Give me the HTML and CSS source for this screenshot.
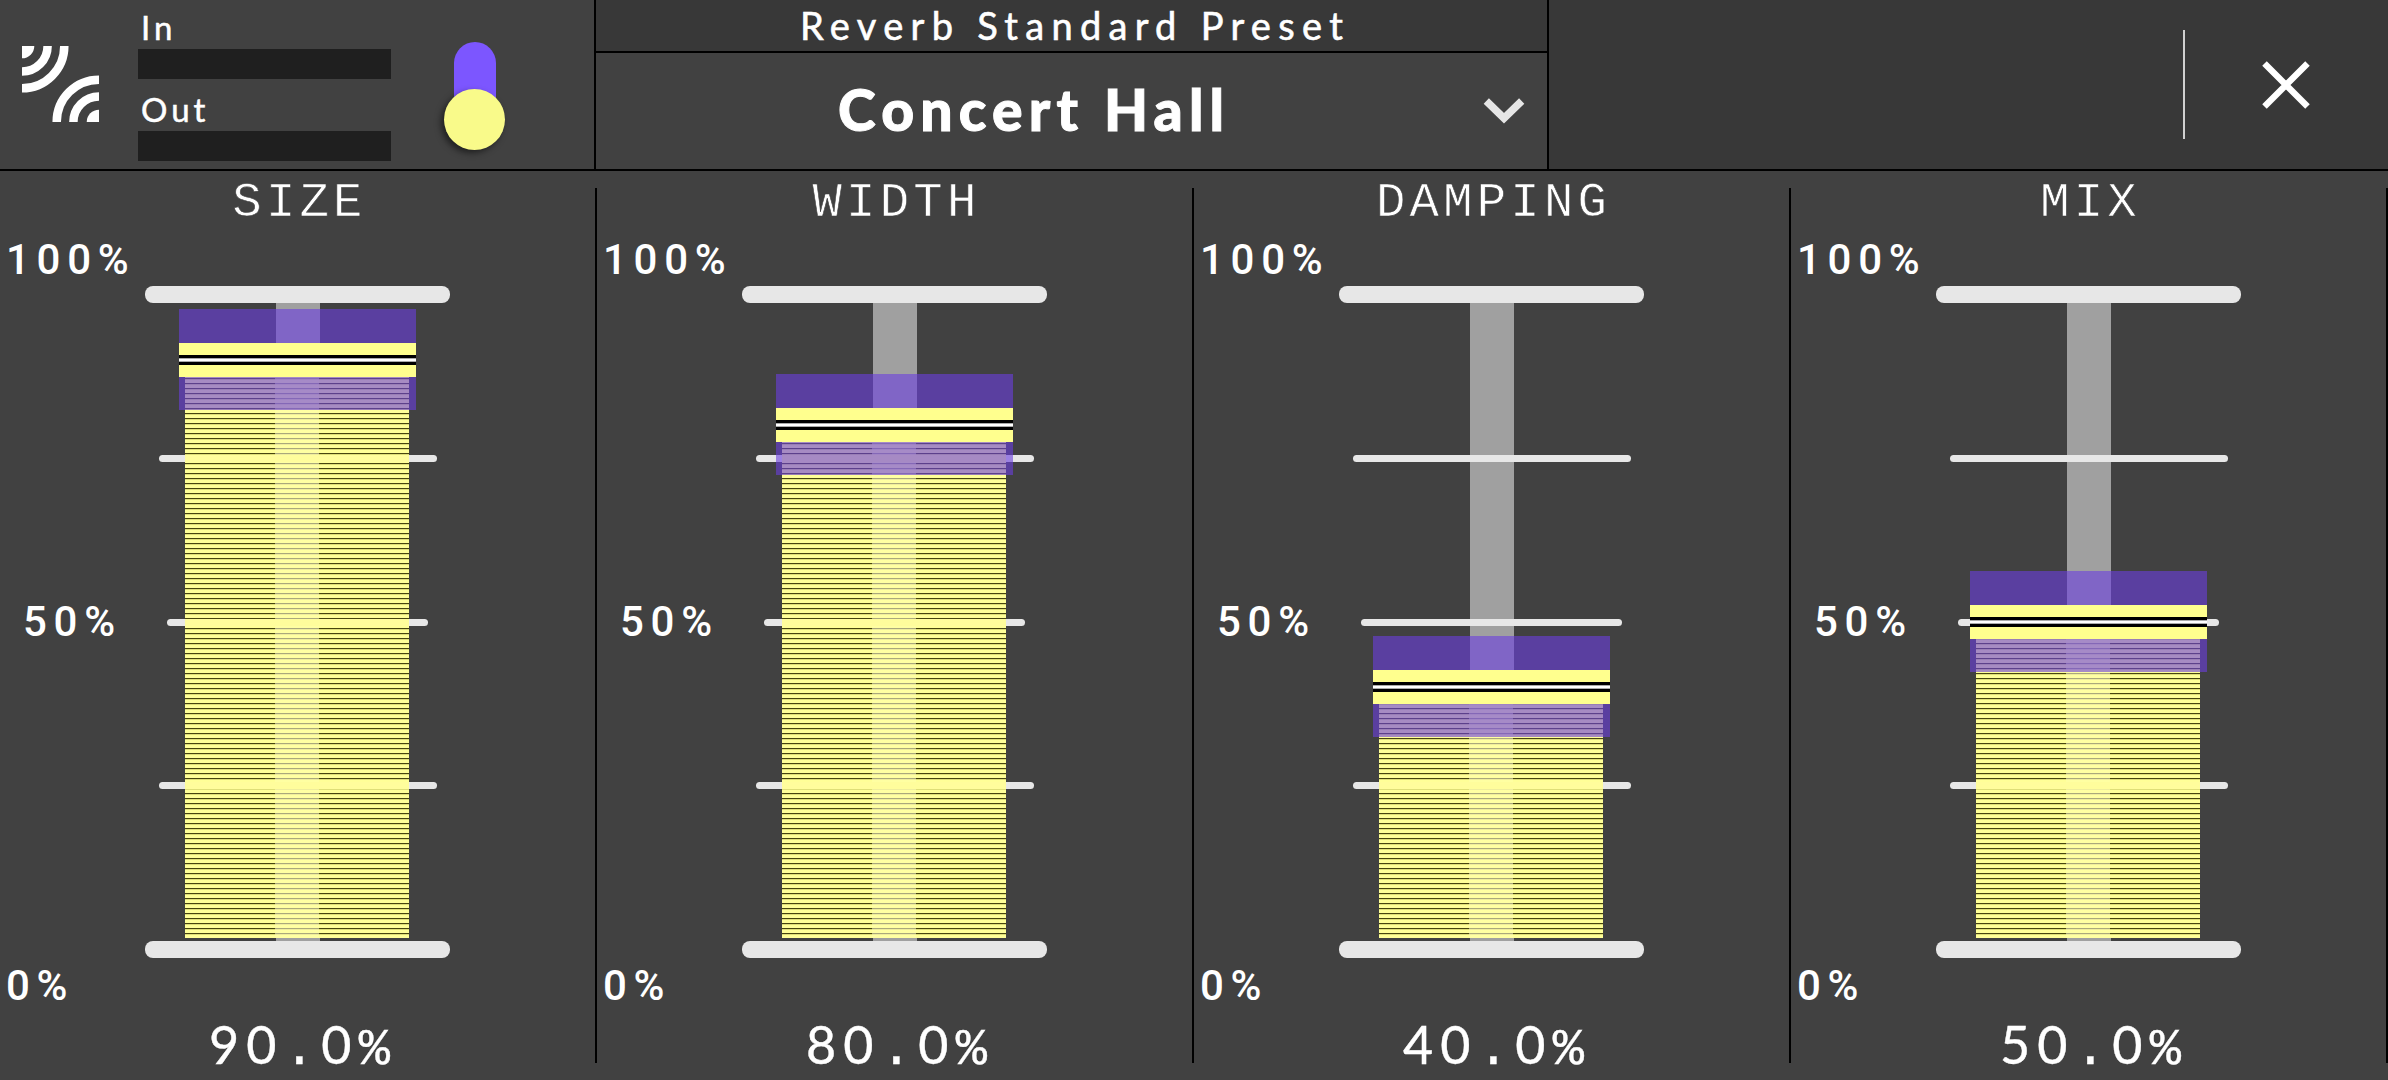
FILE: index.html
```html
<!DOCTYPE html>
<html lang="en">
<head>
<meta charset="utf-8">
<title>Reverb</title>
<link rel="stylesheet" href="styles.css">
</head>
<body>
<header class="topbar">
  <section class="io">
    <svg class="logo" viewBox="0 0 77 76" width="77" height="76" fill="none" stroke="#fff" stroke-width="8.5">
      <path d="M0 0H12.3A12.3 12.3 0 0 1 0 12.3Z" fill="#fff" stroke="none"/>
      <path d="M0 25.6A25.6 25.6 0 0 0 25.6 0M0 42.3A42.3 42.3 0 0 0 42.3 0"/>
      <path d="M77 76H64.7A12.3 12.3 0 0 1 77 63.7Z" fill="#fff" stroke="none"/>
      <path d="M77 50.4A25.6 25.6 0 0 0 51.4 76M77 33.7A42.3 42.3 0 0 0 34.7 76"/>
    </svg>
    <div class="meters">
      <span class="meter-label">In</span><div class="meter"></div>
      <span class="meter-label out">Out</span><div class="meter"></div>
    </div>
    <div class="toggle"><div class="knob"></div></div>
  </section>
  <section class="preset">
    <div class="preset-title"><span>Reverb Standard Preset</span></div>
    <div class="preset-select"><span class="preset-name">Concert Hall</span>
      <svg class="chevron" width="42" height="28" viewBox="0 0 42 28" fill="none" stroke="#e6e6e6" stroke-width="7.5"><path d="M3.3 4L21 21.3L38.7 4"/></svg>
    </div>
  </section>
  <section class="actions">
    <div class="rule"></div>
    <svg class="close" width="48" height="48" viewBox="0 0 48 48" stroke="#fff" stroke-width="6.4"><path d="M2.5 2.5L45.5 45.5M45.5 2.5L2.5 45.5"/></svg>
  </section>
</header>
<main class="faders">
  <section class="fader" style="--y:74px">
    <h2 class="name">SIZE</h2>
    <span class="mark full">100%</span><span class="mark half">50%</span><span class="mark zero">0%</span>
    <div class="slider"><i class="track"></i><i class="tick t75"></i><i class="tick t50"></i><i class="tick t25"></i><i class="fill"></i><i class="glow"></i><i class="thumb"></i><i class="cap"></i><i class="cap base"></i></div>
    <div class="value">90<b>.</b>0<b>%</b></div>
  </section>
  <section class="fader" style="--y:139px">
    <h2 class="name">WIDTH</h2>
    <span class="mark full">100%</span><span class="mark half">50%</span><span class="mark zero">0%</span>
    <div class="slider"><i class="track"></i><i class="tick t75"></i><i class="tick t50"></i><i class="tick t25"></i><i class="fill"></i><i class="glow"></i><i class="thumb"></i><i class="cap"></i><i class="cap base"></i></div>
    <div class="value">80<b>.</b>0<b>%</b></div>
  </section>
  <section class="fader" style="--y:401px">
    <h2 class="name">DAMPING</h2>
    <span class="mark full">100%</span><span class="mark half">50%</span><span class="mark zero">0%</span>
    <div class="slider"><i class="track"></i><i class="tick t75"></i><i class="tick t50"></i><i class="tick t25"></i><i class="fill"></i><i class="glow"></i><i class="thumb"></i><i class="cap"></i><i class="cap base"></i></div>
    <div class="value">40<b>.</b>0<b>%</b></div>
  </section>
  <section class="fader" style="--y:336px">
    <h2 class="name">MIX</h2>
    <span class="mark full">100%</span><span class="mark half">50%</span><span class="mark zero">0%</span>
    <div class="slider"><i class="track"></i><i class="tick t75"></i><i class="tick t50"></i><i class="tick t25"></i><i class="fill"></i><i class="glow"></i><i class="thumb"></i><i class="cap"></i><i class="cap base"></i></div>
    <div class="value">50<b>.</b>0<b>%</b></div>
  </section>
</main>
</body>
</html>
```
FILE: styles.css
```css
* { box-sizing: border-box; }
body { margin: 0; width: 2388px; height: 1080px; overflow: hidden; background: #414141; color: #fff; font-family: Lato, sans-serif; display: flex; flex-direction: column; }

.topbar { height: 171px; flex: none; display: grid; grid-template-columns: 594px 955px 1fr; border-bottom: 2px solid #000; }
.io { display: flex; align-items: flex-start; }
.logo { margin: 46px 0 0 22px; flex: none; }
.meters { margin: 13px 0 0 39px; width: 253px; display: flex; flex-direction: column; }
.meter { height: 30px; background: #1f1f1f; }
.meter-label { height: 36px; padding-left: 3px; font-size: 33px; line-height: 28px; letter-spacing: 4px; -webkit-text-stroke: 0.5px #fff; }
.meter-label.out { height: 52px; padding-top: 16px; }
.toggle { width: 42px; height: 104px; margin: 42px 0 0 63px; border-radius: 21px; background: #7c56ff; display: flex; align-items: flex-end; justify-content: center; }
.knob { width: 61px; height: 61px; margin: 0 1px -4px 0; flex: none; border-radius: 50%; background: #f9fa8a; box-shadow: -3px 3px 6px rgba(0,0,0,.5); }
.preset { border-left: 2px solid #000; border-right: 2px solid #000; display: flex; flex-direction: column; }
.preset-title { height: 53px; background: #383838; border-bottom: 2px solid #000; padding-left: 7px; display: flex; justify-content: center; font-size: 38px; line-height: 51px; letter-spacing: 7.3px; -webkit-text-stroke: 0.6px #fff; white-space: nowrap; }
.preset-select { flex: 1; display: flex; align-items: center; padding: 0 22px 0 242px; justify-content: space-between; }
.preset-name { padding-bottom: 4px; font-size: 57px; font-weight: 900; line-height: 70px; letter-spacing: 6.2px; -webkit-text-stroke: 1px #fff; }
.actions { background: #383838; display: flex; align-items: center; justify-content: flex-end; gap: 77px; padding-right: 78px; }
.rule { width: 2px; height: 109px; background: #d0d0d0; }

.faders { flex: 1; display: grid; grid-template-columns: repeat(4, 597px); }
.fader { display: grid; grid-template-columns: 145px 305px 147px; grid-template-rows: 115px 672px 122px; background: linear-gradient(#000, #000) 100% 17px / 2px 875px no-repeat; }
.name { grid-area: 1 / 1 / 2 / 4; margin: 4px 0 0 1px; width: 597px; text-align: center; font: 400 49px/56px "Liberation Mono", monospace; letter-spacing: 4.2px; -webkit-text-stroke: 0.6px #414141; }
.mark { grid-column: 1; font: 500 42px/48px Roboto, sans-serif; letter-spacing: 6.7px; white-space: nowrap; }
.full { grid-row: 1; margin: 65px 0 0 6px; }
.half { grid-row: 2; margin: 312px 0 0 23px; }
.zero { grid-row: 3; margin: 4px 0 0 6px; }
.slider { grid-area: 2 / 2; display: grid; grid-template-columns: 305px; align-content: start; justify-items: center; }
.slider i { grid-area: 1 / 1; }
.track { width: 44px; height: 640px; margin-top: 16px; background: #a0a0a0; }
.cap { width: 305px; height: 17px; border-radius: 8px; background: #e7e7e7; }
.cap.base { margin-top: 655px; }
.tick { height: 7px; border-radius: 4px; background: #e7e7e7; width: 278px; }
.t75 { margin-top: 169px; }
.t50 { margin-top: 333px; width: 261px; }
.t25 { margin-top: 496px; }
.fill {
  width: 224px;
  height: calc(652px - var(--y));
  margin-top: var(--y);
  margin-right: 1px;
  background:
    linear-gradient(#fffd9c, #fffd9c) 0 calc(100% - 149px) / 100% 7px no-repeat,
    linear-gradient(#fffd9c, #fffd9c) 0 calc(100% - 312px) / 100% 7px no-repeat,
    linear-gradient(#fffd9c, #fffd9c) 0 calc(100% - 476px) / 100% 7px no-repeat,
    repeating-linear-gradient(to top, #ffffa2 0 3px, #efed9c 3px 4px, #aaa87c 4px 5px) 50% 0 / 44px 100% no-repeat,
    repeating-linear-gradient(to top, #ffff98 0 3px, #dede78 3px 4px, #47450f 4px 5px);
}
.glow { width: 237px; height: 101px; margin-top: calc(var(--y) - 51px); background: rgba(107,62,224,.6); }
.thumb { width: 237px; height: 34px; margin-top: calc(var(--y) - 17px); background: linear-gradient(#ffff8e 12px, #000 12px 15px, #aaa 15px 16px, #fff 16px 18px, #aaa 18px 19px, #000 19px 22px, #ffff8e 22px); }
.value { grid-area: 3 / 1 / 4 / 4; margin: 56px 0 0 209px; font: 400 52px/60px Lato, sans-serif; letter-spacing: 7.2px; -webkit-text-stroke: 0.4px #fff; }
.value b { font-family: "Liberation Mono", monospace; font-weight: 400; line-height: 0; letter-spacing: 6.3px; }
```
